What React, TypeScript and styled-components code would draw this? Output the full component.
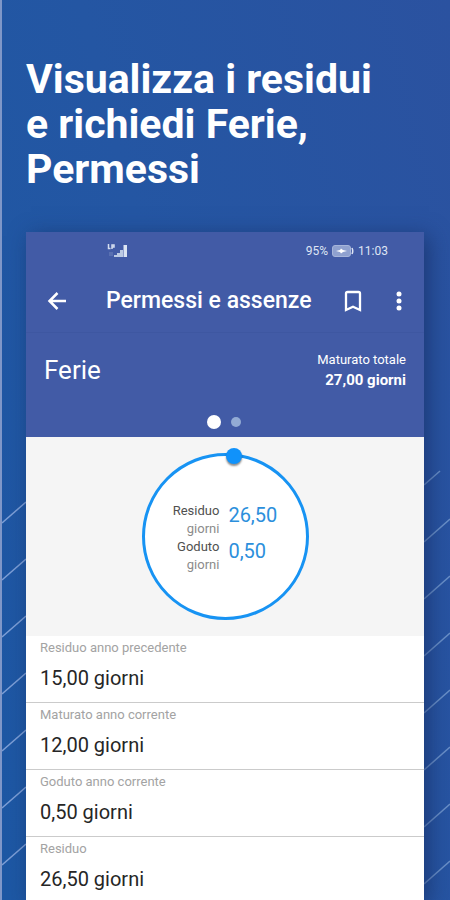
import React from "react";
import styled, { createGlobalStyle } from "styled-components";

const GlobalStyle = createGlobalStyle`
  * { box-sizing: border-box; }
  body {
    margin: 0;
    background: #2454a0;
    font-family: Roboto, "Liberation Sans", sans-serif;
  }
`;

const Page = styled.main`
  min-height: 100vh;
  display: flex;
  flex-direction: column;
  overflow: hidden;
  border-left: 2px solid #7f97c8;
  background: linear-gradient(76deg, #1d58a4 0%, #2456a3 45%, #2b52a0 100%);
`;

const Headline = styled.h1`
  margin: 0;
  padding: 57px 24px 40px;
  color: #fff;
  font-size: 41px;
  font-weight: 700;
  line-height: 45px;
`;

const Line = styled.span`
  display: block;
`;

const Stage = styled.div`
  flex: 1;
  display: grid;
  grid-template-columns: 24px minmax(0, 1fr) 26px;
`;

const Gutter = styled.svg`
  display: block;
  width: 100%;
  height: 100%;
`;

const Phone = styled.section`
  position: relative;
  display: flex;
  flex-direction: column;
  background: #fff;
  box-shadow: 5px 4px 20px rgba(20, 40, 90, 0.6);
`;

const Top = styled.header`
  background: #425ba6;
  color: #fff;
`;

const StatusBar = styled.div`
  height: 38px;
  padding: 0 36px 0 81px;
  display: flex;
  align-items: center;
  justify-content: space-between;
  color: #dfe5f4;
  font-size: 12px;
  line-height: 16px;
`;

const StatusGroup = styled.div`
  display: flex;
  align-items: center;
  gap: 4px;
`;

const AppBar = styled.div`
  height: 63px;
  padding: 0 13px 0 19px;
  display: flex;
  align-items: center;
  border-bottom: 1px solid #3e57a1;
`;

const IconButton = styled.button`
  width: 24px;
  height: 24px;
  padding: 0;
  border: 0;
  background: none;
  color: #fff;
  display: grid;
  place-items: center;
  cursor: pointer;
`;

const Title = styled.h2`
  flex: 1;
  margin: 0 0 0 37px;
  font-size: 23px;
  font-weight: 500;
  line-height: 28px;
  white-space: nowrap;
`;

const Actions = styled.div`
  display: flex;
  gap: 22px;
`;

const Summary = styled.div`
  height: 74px;
  padding: 0 18px;
  display: flex;
  align-items: center;
  justify-content: space-between;
`;

const Kind = styled.h3`
  margin: 0;
  font-size: 26px;
  font-weight: 400;
  line-height: 32px;
`;

const Total = styled.p`
  margin: 0;
  text-align: right;
  font-size: 13px;
  line-height: 20px;
`;

const TotalValue = styled.strong`
  display: block;
  font-size: 15px;
  font-weight: 700;
`;

const Pager = styled.div`
  height: 30px;
  padding-right: 2px;
  display: flex;
  align-items: center;
  justify-content: center;
  gap: 10px;
`;

const Dot = styled.button<{ $active?: boolean }>`
  width: ${(p) => (p.$active ? 14 : 10)}px;
  height: ${(p) => (p.$active ? 14 : 10)}px;
  padding: 0;
  border: 0;
  border-radius: 50%;
  background: ${(p) => (p.$active ? "#fff" : "#93abd4")};
`;

const Gauge = styled.div`
  padding: 16px 0;
  display: flex;
  justify-content: center;
  background: #f5f5f5;
`;

const Ring = styled.div`
  position: relative;
  width: 167px;
  height: 167px;
  border: 3px solid #1793f3;
  border-radius: 50%;
  background: #fff;
  display: flex;
  justify-content: center;
  padding-top: 46px;
`;

const Knob = styled.span`
  position: absolute;
  top: -8px;
  left: 81px;
  width: 16px;
  height: 16px;
  border-radius: 50%;
  background: #1092fb;
  box-shadow: 0 2px 2px rgba(0, 0, 0, 0.45);
`;

const Figures = styled.dl`
  margin: 0;
  display: grid;
  grid-template-columns: auto auto;
  grid-auto-rows: 36px;
  column-gap: 9px;
`;

const FigureLabel = styled.dt`
  color: #505050;
  text-align: right;
  font-size: 13px;
  line-height: 18px;
`;

const Unit = styled.span`
  display: block;
  color: #8c8c8c;
`;

const FigureValue = styled.dd`
  margin: 0;
  color: #2c8fdc;
  font-size: 20px;
  line-height: 27px;
`;

const Details = styled.dl`
  margin: 0;
`;

const Row = styled.div`
  height: 67px;
  padding: 3px 14px 0;
  border-bottom: 1px solid #cbcbcb;
  &:last-child {
    height: 64px;
    border-bottom: 0;
  }
`;

const RowLabel = styled.dt`
  color: #a3a3a3;
  font-size: 13px;
  line-height: 18px;
`;

const RowValue = styled.dd`
  margin: 8px 0 0;
  color: #262626;
  font-size: 20px;
  line-height: 26px;
`;

const details = [
  ["Residuo anno precedente", "15,00 giorni"],
  ["Maturato anno corrente", "12,00 giorni"],
  ["Goduto anno corrente", "0,50 giorni"],
  ["Residuo", "26,50 giorni"],
];

const figures = [
  ["Residuo", "26,50"],
  ["Goduto", "0,50"],
];

function Stripes({ lines, color }: { lines: string[]; color: string }) {
  return (
    <Gutter aria-hidden="true">
      {lines.map((d) => (
        <path key={d} d={d} stroke={color} strokeWidth="1.5" fill="none" />
      ))}
    </Gutter>
  );
}

const leftLines = Array.from({ length: 7 }, (_, i) => `M0 ${291 + i * 57}L24 ${270 + i * 57}`);
const rightLines = Array.from({ length: 8 }, (_, i) =>
  i === 0 ? "M0 253L16 239" : `M0 ${253 + i * 57}L26 ${230 + i * 57}`
);

export default function App() {
  return (
    <>
      <GlobalStyle />
      <Page>
        <Headline>
          <Line>Visualizza i residui</Line>
          <Line>e richiedi Ferie,</Line>
          <Line>Permessi</Line>
        </Headline>
        <Stage>
          <Stripes lines={leftLines} color="#7d9fd6" />
          <Phone>
            <Top>
              <StatusBar>
                <svg width="21" height="14" viewBox="0 0 21 14" aria-hidden="true">
                  <path d="M1.500 0v4.500h2M5 5V1h2v2H5" stroke="#d4ddef" fill="none" strokeWidth="1.500" />
                  <path d="M2 9h4M2 11h4" stroke="#7186bd" strokeWidth="1" />
                  <path d="M7 13v-2h3v2zM10 13V9h3v4zM13 13V6h3v7z" fill="#bccae4" />
                  <path d="M16.500 13V1H20v12z" fill="#dce5f3" />
                </svg>
                <StatusGroup>
                  <span>95%</span>
                  <svg width="22" height="12" viewBox="0 0 22 12" aria-hidden="true">
                    <rect x="0.5" y="0.5" width="18" height="11" rx="2.5" fill="#8fa1cf" stroke="#a6b5da" />
                    <path d="M4 6l4-1 1-1.500 2 1.500 4 1-4 1-2 1.500L8 7z" fill="#fff" />
                    <path d="M20 3q1.500 3 0 6" stroke="#dfe5f4" strokeWidth="1.500" fill="none" />
                  </svg>
                  <span>11:03</span>
                </StatusGroup>
              </StatusBar>
              <AppBar>
                <IconButton aria-label="Indietro">
                  <svg width="24" height="24" viewBox="0 0 24 24" aria-hidden="true">
                    <path d="M21 12H5M12.500 4L4.500 12l8 8" stroke="currentColor" strokeWidth="2.500" fill="none" />
                  </svg>
                </IconButton>
                <Title>Permessi e assenze</Title>
                <Actions>
                  <IconButton aria-label="Segnalibro">
                    <svg width="24" height="24" viewBox="0 0 24 24" aria-hidden="true">
                      <path d="M5 21V4.500q0-1.500 1.500-1.500h11q1.500 0 1.500 1.500v16.500l-7-3.300z" stroke="currentColor" strokeWidth="2.300" fill="none" />
                    </svg>
                  </IconButton>
                  <IconButton aria-label="Altro">
                    <svg width="24" height="24" viewBox="0 0 24 24" fill="currentColor" aria-hidden="true">
                      <circle cx="12" cy="5" r="2.500" />
                      <circle cx="12" cy="12" r="2.500" />
                      <circle cx="12" cy="19" r="2.500" />
                    </svg>
                  </IconButton>
                </Actions>
              </AppBar>
              <Summary>
                <Kind>Ferie</Kind>
                <Total>
                  Maturato totale
                  <TotalValue>27,00 giorni</TotalValue>
                </Total>
              </Summary>
              <Pager>
                <Dot $active aria-label="Ferie" />
                <Dot aria-label="Permessi" />
              </Pager>
            </Top>
            <Gauge>
              <Ring>
                <Knob />
                <Figures>
                  {figures.map(([label, value]) => (
                    <React.Fragment key={label}>
                      <FigureLabel>
                        {label}
                        <Unit>giorni</Unit>
                      </FigureLabel>
                      <FigureValue>{value}</FigureValue>
                    </React.Fragment>
                  ))}
                </Figures>
              </Ring>
            </Gauge>
            <Details>
              {details.map(([label, value]) => (
                <Row key={label}>
                  <RowLabel>{label}</RowLabel>
                  <RowValue>{value}</RowValue>
                </Row>
              ))}
            </Details>
          </Phone>
          <Stripes lines={rightLines} color="#6a90c8" />
        </Stage>
      </Page>
    </>
  );
}
